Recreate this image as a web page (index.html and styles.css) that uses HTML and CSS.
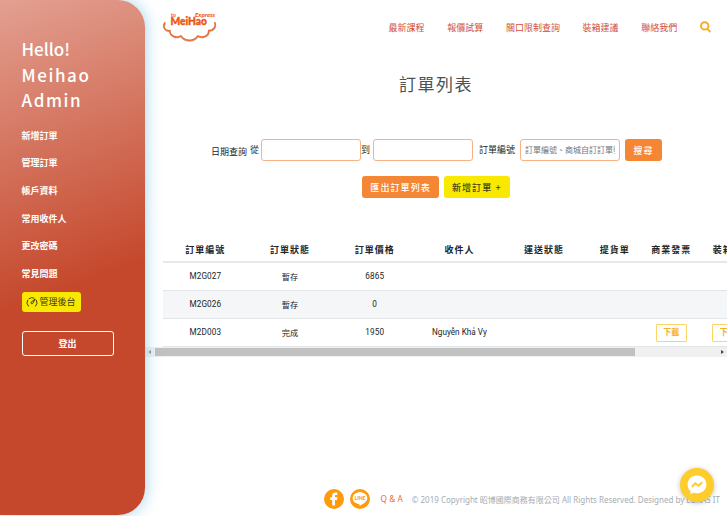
FILE: index.html
```html
<!DOCTYPE html>
<html lang="zh-Hant">
<head>
    <meta charset="UTF-8">
    <meta name="viewport" content="width=device-width, initial-scale=1.0">
    <title>訂單列表 | MeiHao Express</title>
    <link rel="stylesheet" href="styles.css">
</head>
<body>
    <div class="page">
        <aside class="sidebar">
            <div class="hello"><span class="hello-word">Hello!</span><br>Meihao<br>Admin</div>
            <nav class="side-menu">
                <a>新增訂單</a>
                <a>管理訂單</a>
                <a>帳戶資料</a>
                <a>常用收件人</a>
                <a>更改密碼</a>
                <a>常見問題</a>
            </nav>
            <a class="backend-button">
                <svg width="12" height="10" viewBox="0 0 12 10" fill="none" stroke="#443f16" stroke-width="1" stroke-linecap="round">
                    <path d="M2.4 9.2A5 5 0 0 1 1.6 3.2M3 1.7A5 5 0 0 1 8 1M10.4 3.2A5 5 0 0 1 9.6 9.2"/>
                    <path d="M9 2.4 6.6 6.6A1 1 0 0 1 5 5.5Z"/>
                </svg>
                管理後台
            </a>
            <button class="logout-button">登出</button>
        </aside>

        <main class="main">
            <header class="header">
                <svg class="logo" width="54" height="31" viewBox="0 0 54 31">
                    <path class="cloud-shadow" d="M2.6 11.5C-.5 15 1.8 19.8 7 19.4C7 24.6 13 27.5 18 24.8C22 30.5 31 30.5 35 24.8C40 27.5 46.5 24.5 46 19.4C51.5 19.4 54 14.5 51.8 11"/>
                    <path class="cloud" d="M2.2 10.2C-.8 14 1.4 19 6.8 18.6C6.8 23.8 13 26.7 18 23.9C22 29.7 31 29.7 34.8 23.9C40 26.6 46.2 23.6 45.7 18.6C51 18.6 53.6 13.5 51.5 10.2"/>
                    <text class="logo-to" x="8" y="5" textLength="5">to</text>
                    <text class="logo-name" x="7.5" y="12.8" textLength="36.5" lengthAdjust="spacingAndGlyphs">MeiHao</text>
                    <text class="logo-express" x="32" y="5.4" textLength="20" lengthAdjust="spacingAndGlyphs">Express</text>
                </svg>
                <nav class="top-menu">
                    <a>最新課程</a>
                    <a>報價試算</a>
                    <a>關口限制查詢</a>
                    <a>裝箱建議</a>
                    <a>聯絡我們</a>
                    <svg class="search-icon" width="11" height="12" viewBox="0 0 11 12" fill="none" stroke="#f9ae2b" stroke-width="2">
                        <circle cx="4.7" cy="4.9" r="3.7"/>
                        <path d="M7.2 7.6 10.4 11"/>
                    </svg>
                </nav>
            </header>

            <h1>訂單列表</h1>

            <form class="search-form">
                <label class="date-label">日期查詢</label>
                <label class="from-label">從</label>
                <input type="text">
                <label class="to-label">到</label>
                <input type="text">
                <label class="number-label">訂單編號</label>
                <input type="text" placeholder="訂單編號、商城自訂訂單號">
                <button type="button" class="button button-search">搜尋</button>
            </form>
            <div class="actions">
                <button class="button">匯出訂單列表</button>
                <button class="button button-yellow">新增訂單 +</button>
            </div>

            <div class="table-wrap">
                <table>
                    <colgroup>
                        <col class="wide" span="5">
                        <col class="narrow" span="3">
                    </colgroup>
                    <thead>
                        <tr><th>訂單編號</th><th>訂單狀態</th><th>訂單價格</th><th>收件人</th><th>運送狀態</th><th>提貨單</th><th>商業發票</th><th>裝箱單</th></tr>
                    </thead>
                    <tbody>
                        <tr><td>M2G027</td><td>暫存</td><td>6865</td><td></td><td></td><td></td><td></td><td></td></tr>
                        <tr><td>M2G026</td><td>暫存</td><td>0</td><td></td><td></td><td></td><td></td><td></td></tr>
                        <tr><td>M2D003</td><td>完成</td><td>1950</td><td>Nguyễn Khả Vy</td><td></td><td></td><td><a class="download">下載</a></td><td><a class="download">下載</a></td></tr>
                    </tbody>
                </table>
            </div>
            <div class="scrollbar">
                <span class="arrow-left"></span>
                <span class="thumb"></span>
                <span class="arrow-right"></span>
            </div>

            <footer class="footer">
                <svg width="20" height="20" viewBox="0 0 20 20">
                    <circle cx="10" cy="10" r="10" fill="#ff9a0c"/>
                    <path d="M8.2 16.5V11H6.3V8.3H8.2V6.6C8.2 4.5 9.5 3.5 11.4 3.5H13.4V6.1H12C11.2 6.1 11 6.5 11 7.1V8.3H13.4L13 11H11V16.5Z" fill="#fff"/>
                </svg>
                <svg class="line-icon" width="20" height="20" viewBox="0 0 20 20">
                    <circle cx="10" cy="10" r="10" fill="#ff9a0c"/>
                    <path d="M10 3.3C5.8 3.3 2.7 5.8 2.7 9.2C2.7 12.2 5.3 14.4 8.8 14.9C9.8 15.1 9.5 15.8 9.4 16.8C13.5 15 17.3 12.2 17.3 9.2C17.3 5.8 14.2 3.3 10 3.3Z" fill="#fff"/>
                    <text class="line-text" x="4.5" y="11.2" textLength="11" lengthAdjust="spacingAndGlyphs">LINE</text>
                </svg>
                <a class="qa">Q &amp; A</a>
                <span class="copyright">© 2019 Copyright 昭博國際商務有限公司 All Rights Reserved. Designed by LUKAS IT</span>
            </footer>
        </main>

        <div class="messenger">
            <svg width="20" height="20" viewBox="0 0 20 20">
                <path d="M10 .5C4.5 .5.6 4.4.6 9.4C.6 12.2 1.7 14.5 3.5 16.1V19.2L6.4 17.8C12.8 19.6 19.4 15.8 19.4 9.4C19.4 4.4 15.5 .5 10 .5Z" fill="#fff"/>
                <path d="M4.8 12 8.3 8.3 11.6 10.7 15.2 7.2" fill="none" stroke="#ffcd2b" stroke-width="2" stroke-linejoin="round"/>
            </svg>
        </div>
    </div>
</body>
</html>
```

FILE: styles.css
```css
* {
    box-sizing: border-box;
}

body {
    margin: 0;
    font-family: Roboto, "Noto Sans CJK TC", sans-serif;
    font-size: 9px;
    color: #212529;
    background-color: #fff;
}

.page {
    display: flex;
    height: 516px;
    overflow: hidden;
}

.sidebar {
    position: relative;
    z-index: 1;
    flex: none;
    width: 145px;
    height: 515px;
    padding: 36px 22px 0 21.5px;
    color: #fff;
    font-family: "Noto Sans CJK TC", sans-serif;
    background: linear-gradient(160deg, #e3a091 0%, #c5482c 55%);
    border-radius: 0 27px 27px 0;
    box-shadow: 0 0 16px rgba(80, 175, 215, 0.55);
}

.hello {
    font-size: 17px;
    font-weight: 500;
    line-height: 25.5px;
    letter-spacing: 1.6px;
}

.hello-word {
    letter-spacing: 0;
}

.side-menu {
    display: flex;
    flex-direction: column;
    margin-top: 9px;
}

.side-menu a {
    height: 27.7px;
    line-height: 27px;
    font-weight: 700;
}

.backend-button {
    display: flex;
    align-items: center;
    gap: 2px;
    width: 59px;
    height: 20px;
    padding-left: 4px;
    color: #443f16;
    white-space: nowrap;
    background-color: #f9e900;
    border-radius: 3px;
    margin-top: 4px;
}

.logout-button {
    display: block;
    width: 92px;
    height: 25px;
    margin-top: 19.5px;
    padding: 0;
    color: #fff;
    font: 700 9px "Noto Sans CJK TC", sans-serif;
    background: none;
    border: 1px solid #fff;
    border-radius: 3px;
}

.main {
    display: flex;
    flex-direction: column;
    flex: 1;
    min-width: 0;
}

.header {
    display: flex;
    justify-content: space-between;
    height: 56px;
    padding: 12px 16px 0 18px;
}

.logo text {
    fill: #ea5a17;
    font-family: Lato, sans-serif;
    font-weight: 900;
}

.logo .logo-name {
    font-size: 10.5px;
    stroke: #ea5a17;
    stroke-width: 0.4;
}

.logo .logo-to {
    font-size: 5px;
}

.logo .logo-express {
    font-size: 6px;
    font-style: italic;
}

.cloud {
    fill: none;
    stroke: #ee6c2e;
    stroke-width: 1.5;
}

.cloud-shadow {
    fill: none;
    stroke: #bdb5b0;
    stroke-width: 1.2;
}

.top-menu {
    display: flex;
    align-items: center;
    gap: 22.7px;
    height: 31px;
    color: #cf5135;
}

.search-icon {
    margin-bottom: 1px;
}

h1 {
    margin: 14px 0 0;
    font-size: 17px;
    font-weight: 400;
    line-height: 30px;
    letter-spacing: 1.5px;
    text-align: center;
    color: #495357;
}

.search-form {
    display: flex;
    align-items: center;
    height: 22px;
    margin: 39px 0 0 66px;
}

.search-form label {
    flex: none;
    padding-bottom: 1px;
}

.search-form .date-label {
    padding: 3px 0 0;
    margin-right: 3px;
}

.from-label {
    margin-right: 2px;
}

.to-label {
    margin-right: 3px;
}

.number-label {
    margin: 0 5px 0 6px;
}

.search-form input {
    flex: none;
    width: 100px;
    height: 22px;
    padding: 0 4px;
    font: 8px Roboto, "Noto Sans CJK TC", sans-serif;
    background-color: #fff;
    border: 1px solid #f8b182;
    border-radius: 3px;
}

.search-form input::placeholder {
    color: #6c757d;
}

.button {
    height: 22px;
    padding: 0 8px;
    color: #fff;
    font: 500 9px "Noto Sans CJK TC", sans-serif;
    letter-spacing: 1.1px;
    white-space: nowrap;
    background-color: #f58634;
    border: none;
    border-radius: 3px;
}

.button-search {
    width: 37px;
    margin-left: 5px;
}

.button-yellow {
    color: #443f16;
    background-color: #f9e900;
}

.actions {
    display: flex;
    justify-content: center;
    gap: 5px;
    margin-top: 15px;
}

.table-wrap {
    height: 109px;
    margin: 40px 0 0 18px;
    overflow: hidden;
}

table {
    width: 593px;
    table-layout: fixed;
    border-collapse: separate;
    border-spacing: 0;
    text-align: center;
}

.wide {
    width: 84.7px;
}

.narrow {
    width: 56.5px;
}

th,
td {
    padding: 0;
    white-space: nowrap;
}

th {
    height: 25px;
    font-weight: 700;
    letter-spacing: 1px;
    border-bottom: 2px solid #e6e8ea;
}

td {
    height: 28px;
    padding-bottom: 2px;
    font-size: 8.2px;
    border-bottom: 1px solid #e3e6e9;
}

td:nth-child(-n+3) {
    letter-spacing: 0.1px;
}

tbody tr:nth-child(even) {
    background-color: #f5f6f8;
}

.download {
    display: inline-block;
    width: 31px;
    height: 18px;
    margin-top: 2px;
    color: #f9ae2b;
    font-size: 8px;
    font-weight: 700;
    line-height: 16px;
    border: 1px solid #fdd566;
    border-radius: 1px;
    vertical-align: middle;
}

.scrollbar {
    display: flex;
    align-items: center;
    height: 10px;
    padding: 0 3px;
    background-color: #f0f0f0;
}

.arrow-left,
.arrow-right {
    border: 2px solid transparent;
}

.arrow-left {
    border-left: 0;
    border-right: 3px solid #999;
}

.arrow-right {
    margin-left: auto;
    border-right: 0;
    border-left: 3px solid #444;
}

.thumb {
    width: 480px;
    height: 8px;
    margin-left: 4px;
    background-color: #c1c1c1;
}

.footer {
    display: flex;
    align-items: center;
    margin: auto 7px 7px auto;
    font-family: "Noto Sans", "Noto Sans CJK TC", sans-serif;
    font-size: 8px;
    white-space: nowrap;
}

.line-icon {
    margin-left: 6px;
}

.line-text {
    fill: #ff9a0c;
    font: 900 5px Lato, sans-serif;
}

.qa {
    margin: 0 9px 0 11px;
    padding-bottom: 1px;
    color: #ed6a40;
    font-size: 8.3px;
}

.copyright {
    color: #a7adb1;
}

.messenger {
    position: absolute;
    left: 680px;
    top: 468px;
    z-index: 2;
    display: flex;
    align-items: center;
    justify-content: center;
    width: 34px;
    height: 34px;
    background-color: #ffcd2b;
    border-radius: 50%;
    box-shadow: 0 1px 5px rgba(0, 0, 0, 0.25);
}
```
